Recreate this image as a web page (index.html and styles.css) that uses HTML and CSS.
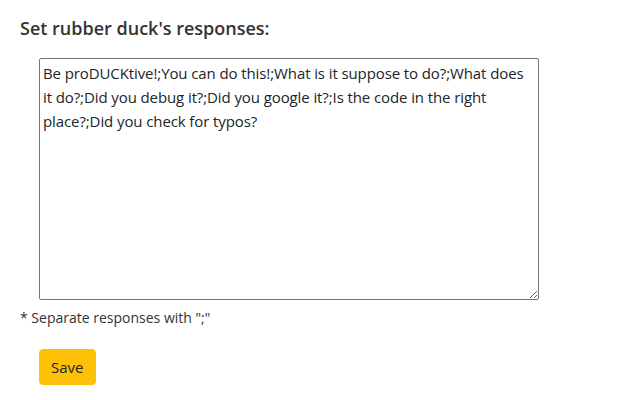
FILE: index.html
```html
<!DOCTYPE html>
<html>
<head>
<meta charset="utf-8">
<link rel="stylesheet" href="styles.css">
</head>
<body>
<div class="page">
  <h2 class="title">Set rubber duck's responses:</h2>
  <div class="field">
    <textarea class="responses">Be proDUCKtive!;You can do this!;What is it suppose to do?;What does it do?;Did you debug it?;Did you google it?;Is the code in the right place?;Did you check for typos?</textarea>
  </div>
  <p class="hint">* Separate responses with ";"</p>
  <div class="actions">
    <button class="save">Save</button>
  </div>
</div>
</body>
</html>
```
FILE: styles.css
```css
html, body {
  margin: 0;
  padding: 0;
  background: #fff;
}
body {
  font-family: "Open Sans", "Noto Sans", sans-serif;
  color: #212529;
}
.page {
  padding: 14px 20px;
}
.title {
  margin: 0;
  font-size: 18px;
  font-weight: 600;
  line-height: 28px;
  color: #333;
}
.field {
  padding: 16px 0 0 19px;
}
.responses {
  display: block;
  box-sizing: border-box;
  width: 500px;
  height: 242px;
  padding: 2px 6px 2px 3px;
  border: 1px solid #767676;
  border-radius: 2px;
  font-family: "Open Sans", "Noto Sans", sans-serif;
  font-size: 15px;
  letter-spacing: -0.1px;
  line-height: 24px;
  color: #212529;
  resize: both;
  margin: 0;
}
.hint {
  margin: 8px 0 0;
  font-size: 14px;
  line-height: 20px;
  color: #333;
}
.actions {
  padding: 21px 0 0 19px;
}
.save {
  background: #ffc107;
  border: 1px solid #ffc107;
  border-radius: 4px;
  color: #212529;
  font-family: "Open Sans", "Noto Sans", sans-serif;
  font-size: 15px;
  line-height: 24px;
  padding: 5px 12px 5px 11px;
  margin: 0;
}
```
